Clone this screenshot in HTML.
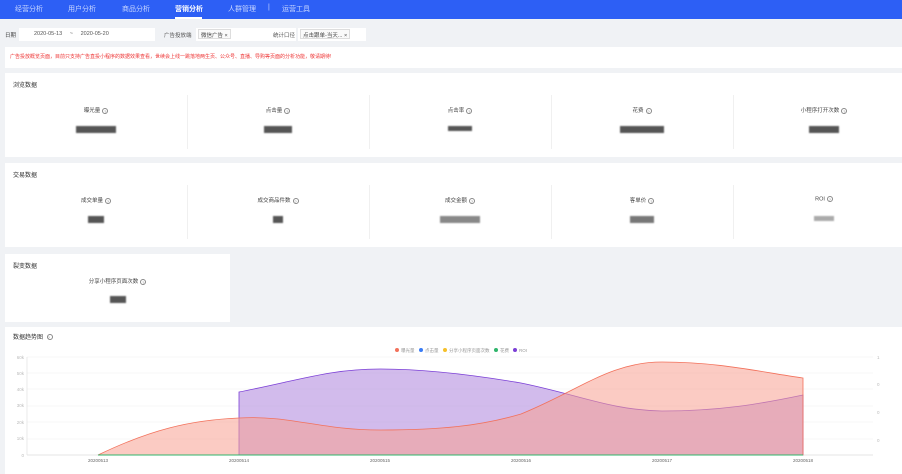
<!DOCTYPE html>
<html><head><meta charset="utf-8"><style>
*{margin:0;padding:0;box-sizing:border-box}
body{width:902px;height:474px;overflow:hidden;background:#f0f2f5;font-family:"Liberation Sans","Noto Sans CJK SC",sans-serif;font-size:6px;color:#333;position:relative}
.nav{position:absolute;left:0;top:0;width:902px;height:19px;background:#2d5ff5;color:#c8d6ff;font-size:7px}
.nav span{position:absolute;top:4px}
.box{position:absolute;background:#fff}
.t{position:absolute;left:8px;font-size:6px;color:#333}
.col{position:absolute;top:0;width:182px;height:100%;text-align:center}
.col .l{position:absolute;top:15px;width:100%;font-size:5.5px;color:#444}
.q{display:inline-block;width:6px;height:6px;border:0.6px solid #888;border-radius:50%;font-size:4px;line-height:5px;vertical-align:middle;color:#888;margin-left:2px}
.v{position:absolute;top:35px;left:50%;height:7px;background:#555;filter:blur(0.8px);transform:translateX(-50%)}
.dv{position:absolute;top:4px;bottom:8px;width:1px;background:#f0f0f0}
.tag{position:absolute;top:30px;height:10px;border:1px solid #ddd;background:#fafafa;font-size:5.5px;padding:1px 2px;color:#444}
</style></head><body>
<div class="nav">
<span style="left:15px">经营分析</span><span style="left:68px">用户分析</span><span style="left:122px">商品分析</span>
<span style="left:175px;color:#fff;font-weight:bold">营销分析</span><span style="left:228px">人群管理</span><span style="left:268px">|</span><span style="left:282px">运营工具</span>
<div style="position:absolute;left:175px;top:17px;width:27px;height:2px;background:#fff"></div>
</div>
<div style="position:absolute;left:5px;top:31px;font-size:5.5px;color:#444">日期</div>
<div class="box" style="left:19px;top:28px;width:136px;height:13px"></div>
<div style="position:absolute;left:34px;top:31px;font-size:5.5px;color:#555">2020-05-13 &nbsp;&nbsp;&nbsp;&nbsp;~&nbsp;&nbsp;&nbsp;&nbsp; 2020-05-20</div>
<div style="position:absolute;left:164px;top:31px;font-size:5.5px;color:#555">广告投放端</div>
<div class="box" style="left:196px;top:28px;width:100px;height:13px"></div>
<div class="tag" style="left:198px;top:29px">微信广告 ×</div>
<div style="position:absolute;left:273px;top:31px;font-size:5.5px;color:#555">统计口径</div>
<div class="box" style="left:298px;top:28px;width:68px;height:13px"></div>
<div class="tag" style="left:300px;top:29px">点击跟单-当天... ×</div>
<div class="box" style="left:5px;top:47px;width:897px;height:21px"></div>
<div style="position:absolute;left:10px;top:53px;font-size:5px;color:#e33">广告投放概览页面，目前只支持广告直投小程序的数据效果查看，世续会上线一跳落地两生页、公众号、直播、导购等页面的分析功能，敬请期待!</div>

<div class="box" style="left:5px;top:73px;width:897px;height:84px">
<div class="t" style="top:7px">浏览数据</div>
<div style="position:absolute;left:0;top:18px;width:100%;height:66px">
<div class="col" style="left:0"><div class="l">曝光量<span class="q">?</span></div><div class="v" style="width:40px"></div></div>
<div class="dv" style="left:182px"></div>
<div class="col" style="left:182px"><div class="l">点击量<span class="q">?</span></div><div class="v" style="width:28px"></div></div>
<div class="dv" style="left:364px"></div>
<div class="col" style="left:364px"><div class="l">点击率<span class="q">?</span></div><div class="v" style="width:24px;height:5px"></div></div>
<div class="dv" style="left:546px"></div>
<div class="col" style="left:546px"><div class="l">花费<span class="q">?</span></div><div class="v" style="width:44px"></div></div>
<div class="dv" style="left:728px"></div>
<div class="col" style="left:728px"><div class="l">小程序打开次数<span class="q">?</span></div><div class="v" style="width:30px"></div></div>
</div></div>

<div class="box" style="left:5px;top:163px;width:897px;height:84px">
<div class="t" style="top:7px">交易数据</div>
<div style="position:absolute;left:0;top:18px;width:100%;height:66px">
<div class="col" style="left:0"><div class="l">成交单量<span class="q">?</span></div><div class="v" style="width:16px"></div></div>
<div class="dv" style="left:182px"></div>
<div class="col" style="left:182px"><div class="l">成交商品件数<span class="q">?</span></div><div class="v" style="width:10px"></div></div>
<div class="dv" style="left:364px"></div>
<div class="col" style="left:364px"><div class="l">成交金额<span class="q">?</span></div><div class="v" style="width:40px;background:#888"></div></div>
<div class="dv" style="left:546px"></div>
<div class="col" style="left:546px"><div class="l">客单价<span class="q">?</span></div><div class="v" style="width:24px;background:#777"></div></div>
<div class="dv" style="left:728px"></div>
<div class="col" style="left:728px"><div class="l">ROI<span class="q">?</span></div><div class="v" style="width:20px;background:#aaa;height:5px"></div></div>
</div></div>

<div class="box" style="left:5px;top:254px;width:225px;height:68px">
<div class="t" style="top:7px">裂变数据</div>
<div class="col" style="left:0;width:225px;top:8px"><div class="l">分享小程序页面次数<span class="q">?</span></div><div class="v" style="width:16px;top:34px"></div></div>
</div>

<div class="box" style="left:5px;top:327px;width:897px;height:147px">
<div class="t" style="top:5px">数据趋势图 <span class="q">?</span></div>
</div>
<svg style="position:absolute;left:0;top:340px" width="902" height="134" font-family="Liberation Sans,Noto Sans CJK SC,sans-serif" font-size="4.5" fill="#999">
<g font-size="4.5">
<circle cx="397" cy="10" r="2" fill="#f2715b"/><text x="401" y="12">曝光量</text>
<circle cx="421" cy="10" r="2" fill="#3a7cf5"/><text x="425" y="12">点击量</text>
<circle cx="445" cy="10" r="2" fill="#f5c02a"/><text x="449" y="12">分享小程序页面次数</text>
<circle cx="496" cy="10" r="2" fill="#2fb56b"/><text x="500" y="12">花费</text>
<circle cx="515" cy="10" r="2" fill="#7b3fd6"/><text x="519" y="12">ROI</text>
</g>
<g stroke="#f0f0f0" stroke-width="0.6">
<line x1="27" y1="17" x2="873" y2="17"/><line x1="27" y1="33" x2="873" y2="33"/><line x1="27" y1="49" x2="873" y2="49"/><line x1="27" y1="66" x2="873" y2="66"/><line x1="27" y1="82" x2="873" y2="82"/><line x1="27" y1="99" x2="873" y2="99"/>
</g>
<line x1="27" y1="115" x2="873" y2="115" stroke="#ccc" stroke-width="0.6"/>
<line x1="27" y1="17" x2="27" y2="115" stroke="#ddd" stroke-width="0.6"/>
<path d="M239 52 C300 40 330 29 380 29 C430 29 480 36 521 43 C580 55 610 70 662 71 C720 71 760 64 803 55 L803 115 L239 115Z" fill="#b48ee0" fill-opacity="0.6" stroke="#7b3fd6" stroke-width="0.8"/>
<path d="M98 115 C150 90 190 80 239 78 C290 75 320 90 380 90 C440 90 480 86 521 74 C580 50 610 22 662 22 C720 22 760 32 803 38 L803 115Z" fill="#f7a092" fill-opacity="0.55" stroke="#f2715b" stroke-width="0.8"/>
<line x1="98" y1="115" x2="803" y2="115" stroke="#2fb56b" stroke-width="1"/>
<g fill="#666" font-size="4.5" text-anchor="middle">
<text x="98" y="122">20200513</text><text x="239" y="122">20200514</text><text x="380" y="122">20200515</text><text x="521" y="122">20200516</text><text x="662" y="122">20200517</text><text x="803" y="122">20200518</text>
</g>
<g fill="#bbb" font-size="4.5" text-anchor="end"><text x="24" y="117">0</text><text x="24" y="100">10k</text><text x="24" y="84">20k</text><text x="24" y="67">30k</text><text x="24" y="51">40k</text><text x="24" y="35">50k</text><text x="24" y="19">60k</text></g>
<g fill="#bbb" font-size="4.5"><text x="877" y="19">1</text><text x="877" y="46">0</text><text x="877" y="74">0</text><text x="877" y="102">0</text></g>
</svg>
</body></html>
